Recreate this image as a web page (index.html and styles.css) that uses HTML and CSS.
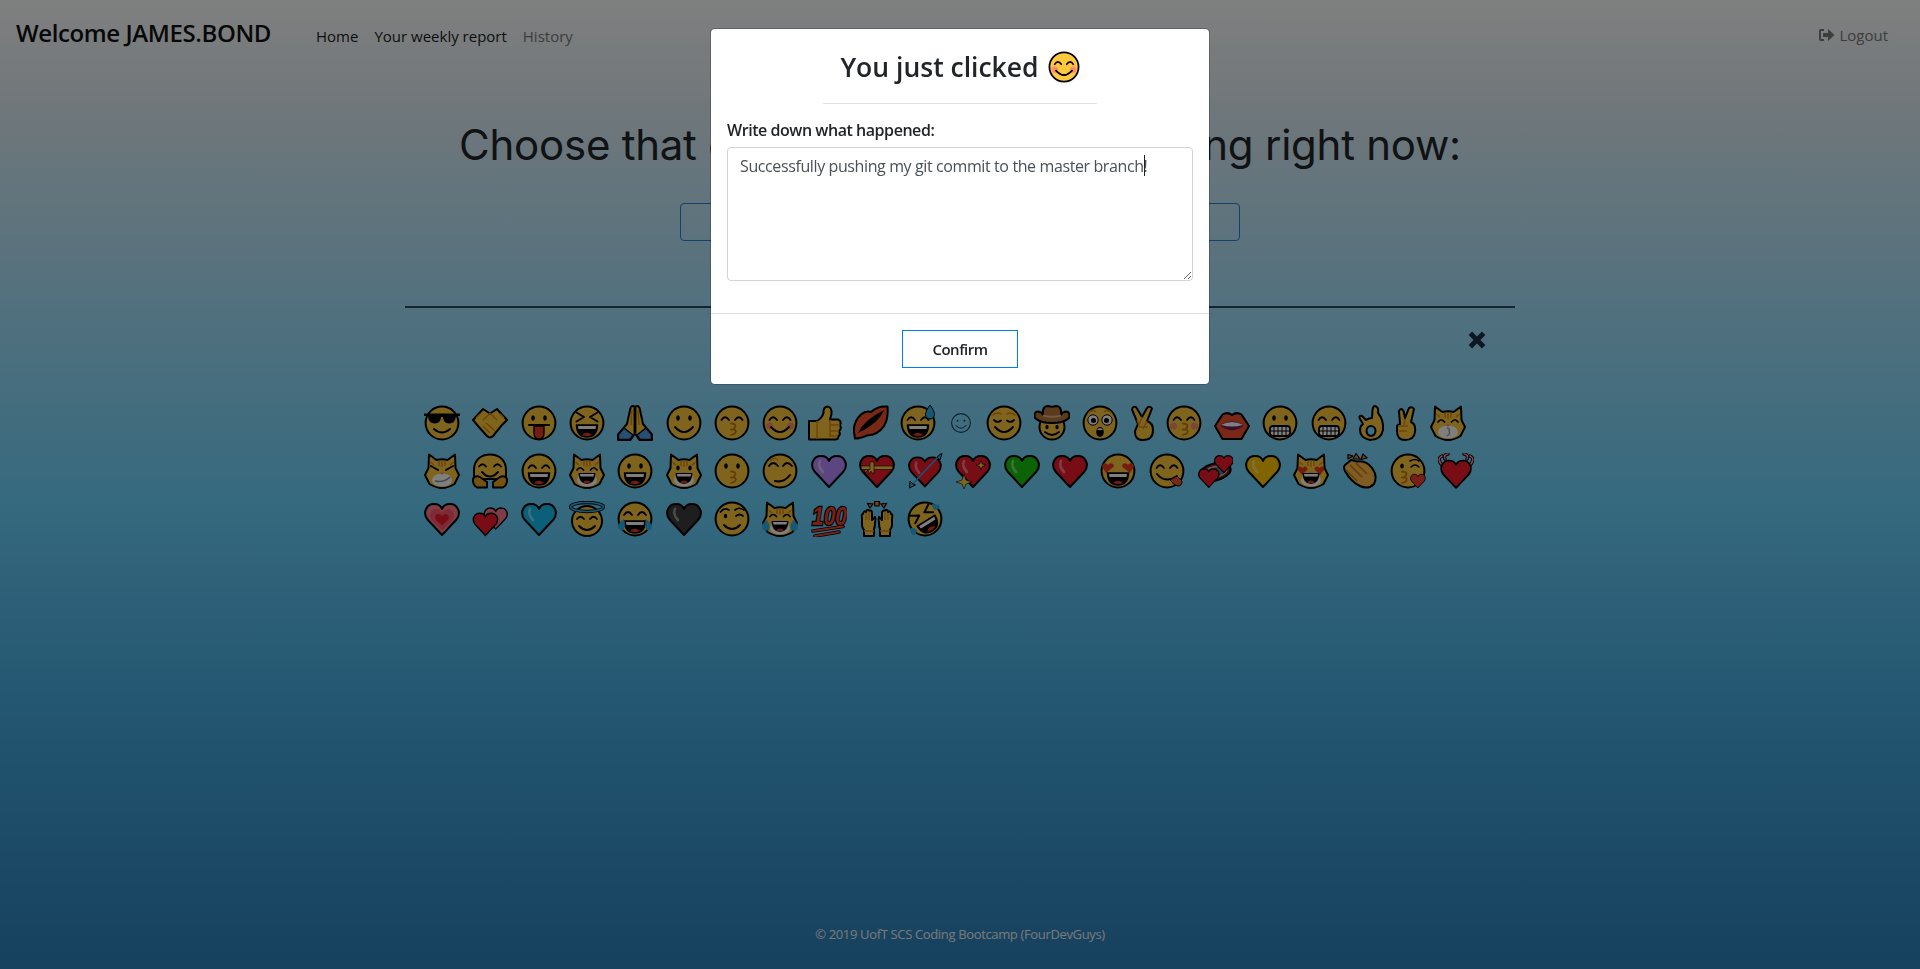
FILE: index.html
```html
<!DOCTYPE html>
<html lang="en">
<head>
<meta charset="utf-8">
<title>Emoji journal</title>
<link rel="stylesheet" href="styles.css">
</head>
<body>
<svg class="defs" aria-hidden="true">
<defs>
<!-- shared parts -->
<g id="F"><circle cx="18" cy="18" r="16.4" fill="#ffc83d" stroke="#000" stroke-width="2"/></g>
<g id="Cat"><path d="M5 1.5 12.5 7Q18 5.6 23.5 7L31 1.5 31.5 15 35 22 30.5 31Q24 35 18 35 12 35 5.5 31L1 22 4.5 15Z" fill="#ffc83d" stroke="#000" stroke-width="2" stroke-linejoin="round"/><path d="M15 7.5V13M18 7V14M21 7.5V13M6.5 9 10 12M29.5 9 26 12" stroke="#e08a10" stroke-width="1.5" fill="none"/><ellipse cx="18" cy="27" rx="10" ry="6.6" fill="#fff"/><path d="M16 19.5H20L18 22Z" fill="#f08a70"/></g>
<path id="Arcs" d="M7.500 15Q11 9.500 15 15M21 15Q25 9.500 28.500 15" fill="none" stroke="#000" stroke-width="1.800" stroke-linecap="round"/>
<g id="Dots"><ellipse cx="12" cy="13" rx="1.800" ry="2.800"/><ellipse cx="24" cy="13" rx="1.800" ry="2.800"/></g>
<path id="Smile" d="M9 22Q18 32 27 22" fill="none" stroke="#000" stroke-width="2" stroke-linecap="round"/>
<g id="Laugh"><path d="M7.500 20H28.500Q28 32 18 32 8 32 7.500 20Z" fill="#000" stroke="#000" stroke-width="1.500" stroke-linejoin="round"/><path d="M9 21H27L26.500 24H9.500Z" fill="#fff"/><path d="M13 30Q18 25.500 23 30 18 32 13 30Z" fill="#e8391f"/></g>
<g id="CatLaugh"><path d="M9.500 20H26.500Q26 31 18 31 10 31 9.500 20Z" fill="#000"/><path d="M11 21H25L24.500 23.500H11.500Z" fill="#fff"/><path d="M14 29.500Q18 25.500 22 29.500 18 31 14 29.500Z" fill="#e8391f"/></g>
<g id="Teeth"><rect x="8" y="21" width="20" height="10" rx="3" fill="#fff" stroke="#000" stroke-width="1.800"/><path d="M12 21V31M16 21V31M20 21V31M24 21V31M8 26H28" stroke="#000" stroke-width="1"/></g>
<path id="Kiss" d="M17 18.500Q23 19 21 22.500 18.500 24 21 25 24 28 17 30M17 24.500H20" fill="none" stroke="#c9780a" stroke-width="1.800" stroke-linecap="round"/>
<g id="Blush"><circle cx="7.500" cy="21" r="3.500" fill="#ff8a70"/><circle cx="28.500" cy="21" r="3.500" fill="#ff8a70"/></g>
<path id="H" d="M18 34 3.500 18.500C-2 11 3 3 10 3 14 3 17 5 18 8 19 5 22 3 26 3 33 3 38 11 32.500 18.500Z" stroke="#000" stroke-width="2" stroke-linejoin="round"/>
<path id="Shine" d="M9 8Q6.500 13 12 19" fill="none" stroke="#fff" stroke-opacity=".45" stroke-width="2.600" stroke-linecap="round"/>
<path id="EyeH" d="M6 20 2 13.500C2 10 6 9 8 12 10 9 14 10 14 13.500ZM30 20 34 13.500C34 10 30 9 28 12 26 9 22 10 22 13.500Z" fill="#e8391f"/>

<!-- whole emoji -->
<symbol id="e-cool" viewBox="0 0 36 36"><use href="#F"/><path d="M0 8.500H36V11H32Q31.500 18.500 25 18.500 19.500 18.500 19 12H17Q16.500 18.500 11 18.500 4.500 18.500 4 11H0Z"/><path d="M10 24Q18 31 26 24" fill="none" stroke="#000" stroke-width="2" stroke-linecap="round"/></symbol>
<symbol id="e-shake" viewBox="0 0 36 36"><path d="M11 4 18 8.500 25 4 35 15 30 20 21 31Q18 34 15 31L6 21 1 15Z" fill="#ffc83d" stroke="#000" stroke-width="2" stroke-linejoin="round"/><path d="M11 15 18 8.500 25 15M14 18 23 26M11 21 18 28M8 9 4 13M28 9 32 13" stroke="#e08a10" stroke-width="1.600" fill="none"/></symbol>
<symbol id="e-tongue" viewBox="0 0 36 36"><use href="#F"/><use href="#Dots"/><path d="M8 20H28" stroke="#000" stroke-width="2" stroke-linecap="round"/><path d="M13 21H23V28Q23 34 18 34 13 34 13 28Z" fill="#e8391f" stroke="#000" stroke-width="1.400"/></symbol>
<symbol id="e-xd" viewBox="0 0 36 36"><use href="#F"/><path d="M7.500 7.500 15 12 7.500 16.500M28.500 7.500 21 12 28.500 16.500" fill="none" stroke="#000" stroke-width="2" stroke-linecap="round" stroke-linejoin="round"/><use href="#Laugh"/></symbol>
<symbol id="e-pray" viewBox="0 0 36 36"><path d="M16 1Q13.500 1 13 5L10 19 1 29.500V35H13.500L17.600 29V3Q17.500 1 16 1ZM20 1Q22.500 1 23 5L26 19 35 29.500V35H22.500L18.400 29V3Q18.500 1 20 1Z" fill="#ffc83d" stroke="#000" stroke-width="2" stroke-linejoin="round"/><path d="M7 23 1.500 29.500V34.500H13L16 30ZM29 23 34.500 29.500V34.500H23L20 30Z" fill="#4f9fe8" stroke="#000" stroke-width="1.500" stroke-linejoin="round"/><path d="M15 5 14 20M21 5 22 20" stroke="#e08a10" stroke-width="1.500"/></symbol>
<symbol id="e-smile" viewBox="0 0 36 36"><use href="#F"/><use href="#Dots"/><use href="#Smile"/></symbol>
<symbol id="e-kiss-closed" viewBox="0 0 36 36"><use href="#F"/><use href="#Arcs"/><use href="#Kiss"/></symbol>
<symbol id="e-blush" viewBox="0 0 36 36"><use href="#F"/><use href="#Blush"/><use href="#Arcs"/><use href="#Smile"/></symbol>
<symbol id="e-thumb" viewBox="0 0 36 36"><path d="M1 16H9Q14 13 15.500 8 15 2 19.500 1.500 24 2 23.500 9L22 14.500H30Q34 16 32 20 34 24 31 26 33 30 30 31.500 31 34.500 27 34.500H1Z" fill="#ffc83d" stroke="#000" stroke-width="2" stroke-linejoin="round"/><path d="M9 16V34M22 15V20H32M22 20V26H31M22 26V31H30" stroke="#e08a10" stroke-width="1.500" fill="none"/></symbol>
<symbol id="e-lips" viewBox="0 0 36 36"><path d="M1 27Q0 17 8 9.500 13 5 18 7 24 1.500 32 1.500H34.500Q35.500 14 31 21 25 30 14 30.500 7 33.500 2 33.500Z" fill="#f0502a" stroke="#000" stroke-width="2" stroke-linejoin="round"/><path d="M5 28Q11 15 31 5 26 18 5 28Z"/></symbol>
<symbol id="e-sweat" viewBox="0 0 36 36"><use href="#F"/><use href="#Arcs"/><use href="#Laugh"/><path d="M30 0Q25.500 6 25.500 9.500A4.500 4.500 0 0 0 34.500 9.500Q34.500 6 30 0Z" fill="#2ab0ec" stroke="#000" stroke-width="1"/></symbol>
<symbol id="e-text-smile" viewBox="0 0 36 36"><g fill="none" stroke="#16405a" stroke-width="1.100"><circle cx="18" cy="18" r="9.400"/><path d="M13 20.500Q18 26 23 20.500" stroke-linecap="round"/></g><circle cx="14.600" cy="15.800" r="1" fill="#16405a"/><circle cx="21.400" cy="15.800" r="1" fill="#16405a"/></symbol>
<symbol id="e-relieved" viewBox="0 0 36 36"><use href="#F"/><path d="M8 15Q11.500 18.500 15 15.500M21 15.500Q24.500 18.500 28 15" fill="none" stroke="#000" stroke-width="1.800" stroke-linecap="round"/><path d="M7 10Q11 6.500 15 9M21 9Q25 6.500 29 10" fill="none" stroke="#e08a10" stroke-width="1.600" stroke-linecap="round"/><use href="#Smile"/></symbol>
<symbol id="e-cowboy" viewBox="0 0 36 36"><circle cx="18" cy="22" r="12.500" fill="#ffc83d" stroke="#000" stroke-width="2"/><path d="M1 13Q-.5 6.500 4 6.500 8 7 9 10 8 1 14 1 18 2.500 22 1 28 1 27 10 28 7 32 6.500 36.500 6.500 35 13 30 18 18 18 6 18 1 13Z" fill="#b4763a" stroke="#000" stroke-width="2" stroke-linejoin="round"/><path d="M9 10.500Q18 13 27 10.500" stroke="#e0b080" stroke-width="2" fill="none"/><ellipse cx="13" cy="22" rx="1.600" ry="2.300"/><ellipse cx="23" cy="22" rx="1.600" ry="2.300"/><path d="M11 27Q18 33 25 27" fill="none" stroke="#000" stroke-width="1.800" stroke-linecap="round"/></symbol>
<symbol id="e-shock" viewBox="0 0 36 36"><use href="#F"/><circle cx="11" cy="15" r="5.200" fill="#fff" stroke="#000" stroke-width="1"/><circle cx="25" cy="15" r="5.200" fill="#fff" stroke="#000" stroke-width="1"/><circle cx="11.500" cy="15.500" r="2.500"/><circle cx="24.500" cy="15.500" r="2.500"/><path d="M6 8Q10 4.500 14 6.500M22 6.500Q26 4.500 30 8" fill="none" stroke="#e08a10" stroke-width="1.500"/><ellipse cx="18" cy="27" rx="3.800" ry="5"/><path d="M15 24.500Q18 22 21 24.500 18 25.800 15 24.500Z" fill="#fff"/></symbol>
<symbol id="e-crossed" viewBox="0 0 36 36"><path d="M14 19 8 4.500Q8.500 1 12 2L18 12 23 3Q26 .5 28 3.500L23 16Q29 18 29 25 29 35 19 35 10.500 35 11 26Z" fill="#ffc83d" stroke="#000" stroke-width="2" stroke-linejoin="round"/><path d="M18 12 15 20 13 15M15 22H24M23 16 19 24" stroke="#e08a10" stroke-width="1.400" fill="none"/></symbol>
<symbol id="e-kiss-blush" viewBox="0 0 36 36"><use href="#F"/><use href="#Blush"/><use href="#Arcs"/><use href="#Kiss"/></symbol>
<symbol id="e-mouth" viewBox="0 0 36 36"><path d="M1 21 8.500 9.500Q13.500 6.500 18 10 22.500 6.500 27.500 9.500L35 21 27.500 34H8.500Z" fill="#f0502a" stroke="#000" stroke-width="2" stroke-linejoin="round"/><path d="M6 20.500Q18 12 30 20.500 18 30 6 20.500Z" fill="#7a1b60"/><path d="M7 20Q18 14 29 20 18 23 7 20Z" fill="#fff"/></symbol>
<symbol id="e-grin" viewBox="0 0 36 36"><use href="#F"/><use href="#Dots"/><use href="#Teeth"/></symbol>
<symbol id="e-beam" viewBox="0 0 36 36"><use href="#F"/><use href="#Arcs"/><use href="#Teeth"/></symbol>
<symbol id="e-ok" viewBox="0 0 36 36"><path fill-rule="evenodd" d="M22 1Q26 2 25 8 31 15 30 25 28 35 17 35 7 33 7 25 7 21 10 19L6.500 13Q6 10 9 11L13 15Q16 13 19 13L19.500 5Q20 1 22 1ZM18 21A4.500 5 0 1 0 18 31 4.500 5 0 1 0 18 21Z" fill="#ffc83d" stroke="#000" stroke-width="2" stroke-linejoin="round"/></symbol>
<symbol id="e-peace" viewBox="0 0 36 36"><path d="M12 19 11 6Q13 2 15.500 6L17 13 21 3Q24 1 26 4L23 17Q28 19 27 27 26 35 17 35 9 35 9 26L9 21Q10 19 12 19Z" fill="#ffc83d" stroke="#000" stroke-width="2" stroke-linejoin="round"/><path d="M10 21H20M11 26H19M17 14 16 20" stroke="#e08a10" stroke-width="1.400" fill="none"/></symbol>
<symbol id="e-cat-kiss" viewBox="0 0 36 36"><use href="#Cat"/><path d="M8 17Q11 12.500 14.500 17M21.500 17Q25 12.500 28 17" fill="none" stroke="#000" stroke-width="1.700" stroke-linecap="round"/><path d="M17 23Q21 24 19 26 21 28 17 31" fill="none" stroke="#a0a0a0" stroke-width="1.500"/></symbol>

<symbol id="e-cat-smirk" viewBox="0 0 36 36"><use href="#Cat"/><path d="M7 13 14 17M29 13 22 17" stroke="#000" stroke-width="2" stroke-linecap="round"/><path d="M11 28Q20 30 26 24" fill="none" stroke="#909090" stroke-width="1.600"/></symbol>
<symbol id="e-hug" viewBox="0 0 36 36"><path d="M2 17C2 7 9 1.500 18 1.500S34 7 34 17V26H2Z" fill="#ffc83d" stroke="#000" stroke-width="2"/><path d="M7 13.500Q10.500 9 14 13.500M22 13.500Q25.500 9 29 13.500" fill="none" stroke="#000" stroke-width="1.800" stroke-linecap="round"/><path d="M10 19Q18 28 26 19" fill="none" stroke="#000" stroke-width="2" stroke-linecap="round"/><path d="M1 26Q3 22 8 24L15 29V34.500H5Q.5 32 1 26ZM35 26Q33 22 28 24L21 29V34.500H31Q35.500 32 35 26Z" fill="#e8a520" stroke="#000" stroke-width="2" stroke-linejoin="round"/></symbol>
<symbol id="e-laugh" viewBox="0 0 36 36"><use href="#F"/><use href="#Arcs"/><use href="#Laugh"/></symbol>
<symbol id="e-cat-laugh" viewBox="0 0 36 36"><use href="#Cat"/><path d="M8 17Q11 12.500 14.500 17M21.500 17Q25 12.500 28 17" fill="none" stroke="#000" stroke-width="1.700" stroke-linecap="round"/><use href="#CatLaugh"/></symbol>
<symbol id="e-open" viewBox="0 0 36 36"><use href="#F"/><use href="#Dots"/><use href="#Laugh"/></symbol>
<symbol id="e-cat-open" viewBox="0 0 36 36"><use href="#Cat"/><ellipse cx="12" cy="15" rx="1.700" ry="2.400"/><ellipse cx="24" cy="15" rx="1.700" ry="2.400"/><use href="#CatLaugh"/></symbol>
<symbol id="e-kiss" viewBox="0 0 36 36"><use href="#F"/><use href="#Dots"/><use href="#Kiss"/></symbol>
<symbol id="e-smirk" viewBox="0 0 36 36"><use href="#F"/><path d="M7 13Q11 7 16 13M21 13Q25 7 30 13" fill="none" stroke="#000" stroke-width="1.800" stroke-linecap="round"/><path d="M8 8Q12 3.500 16 7" fill="none" stroke="#e08a10" stroke-width="1.400"/><path d="M13 28Q22 30 28 22" fill="none" stroke="#000" stroke-width="2" stroke-linecap="round"/></symbol>
<symbol id="e-heart-purple" viewBox="0 0 36 36"><use href="#H" fill="#b98cff"/><use href="#Shine"/></symbol>
<symbol id="e-heart-gift" viewBox="0 0 36 36"><use href="#H" fill="#f01a2c"/><path d="M2 13H34L33 16.500H2.500Z" fill="#ffc83d" stroke="#000" stroke-width=".6"/><path d="M11 9H15V20H13L12 18 10.500 21 9 17 6 20V16.500H11Z" fill="#ffc83d" stroke="#000" stroke-width=".6"/></symbol>
<symbol id="e-heart-arrow" viewBox="0 0 36 36"><use href="#H" fill="#f01a2c" transform="translate(1 1.500) scale(.94)"/><use href="#Shine" transform="translate(1 2) scale(.94)"/><path d="M3 34 31 4" stroke="#2ab0ec" stroke-width="1.500"/><path d="M33.500 1 35 .5 33 7 30 4ZM2.500 35 3 28 6 31 8.500 32Z" fill="#2ab0ec" stroke="#000" stroke-width="1"/></symbol>
<symbol id="e-heart-spark" viewBox="0 0 36 36"><use href="#H" fill="#f01a2c"/><use href="#Shine"/><path d="M9 21 11 27 17 29 11 31 9 36 7 31 1 29 7 27ZM26 7 27.200 11 31 12 27.200 13.500 26 17 24.800 13.500 21 12 24.800 11Z" fill="#ffc83d" stroke="#000" stroke-width=".6"/></symbol>
<symbol id="e-heart-green" viewBox="0 0 36 36"><use href="#H" fill="#16c60c"/><use href="#Shine"/></symbol>
<symbol id="e-heart-red" viewBox="0 0 36 36"><use href="#H" fill="#f01a2c"/><use href="#Shine"/></symbol>
<symbol id="e-heart-eyes" viewBox="0 0 36 36"><use href="#F"/><use href="#EyeH"/><use href="#Laugh"/></symbol>
<symbol id="e-yum" viewBox="0 0 36 36"><use href="#F"/><use href="#Arcs"/><path d="M8 21Q16 31 28 23" fill="none" stroke="#000" stroke-width="2" stroke-linecap="round"/><path d="M21 27 28 23 33 28Q33 33 29 33 25 33 21 27Z" fill="#f0502a" stroke="#000" stroke-width="1"/></symbol>
<symbol id="e-heart-spin" viewBox="0 0 36 36"><ellipse cx="18" cy="19" rx="16" ry="8.500" transform="rotate(-14 18 19)" fill="#7a2a30" stroke="#000" stroke-width="2"/><ellipse cx="18" cy="19" rx="12" ry="5.500" transform="rotate(-14 18 19)" fill="#4d7d8f" stroke="#ff8fa0" stroke-width="1.500"/><use href="#H" fill="#f01a2c" transform="translate(17 1) scale(.55)"/><use href="#H" fill="#f01a2c" transform="translate(1 14) scale(.6)"/></symbol>
<symbol id="e-heart-gold" viewBox="0 0 36 36"><use href="#H" fill="#ffc800"/><use href="#Shine"/></symbol>
<symbol id="e-cat-heart" viewBox="0 0 36 36"><use href="#Cat"/><path d="M9 22 4.500 16.500C4.500 13 8 12.500 9.500 15 11 12.500 14.500 13 14.500 16.500ZM27 22 31.500 16.500C31.500 13 28 12.500 26.500 15 25 12.500 21.500 13 21.500 16.500Z" fill="#e8391f"/><use href="#CatLaugh"/></symbol>
<symbol id="e-clap" viewBox="0 0 36 36"><path d="M3 12 9 7 15 8.500Q24 7 30 15 36 23 32 31 26 37 18 33 9 29 3 18 1 14 3 12Z" fill="#ffb948" stroke="#000" stroke-width="2" stroke-linejoin="round"/><path d="M4 17 15 28M8 12 20 24M14 10 25 21" stroke="#c47a10" stroke-width="1.500" fill="none"/><path d="M11 6 14 .5 18 6ZM19 6.500 21 1 25 5ZM6 6 6 1.500 11 3Z" fill="#f58220" stroke="#000" stroke-width="1.200" stroke-linejoin="round"/></symbol>
<symbol id="e-blow" viewBox="0 0 36 36"><use href="#F"/><ellipse cx="12" cy="13" rx="1.800" ry="2.600"/><path d="M21 14Q25 10 29 14M20 8Q25 5 29 8" fill="none" stroke="#000" stroke-width="1.600" stroke-linecap="round"/><use href="#Kiss" transform="translate(-5 0)"/><use href="#H" fill="#f0402a" transform="translate(20 20) scale(.44)"/></symbol>
<symbol id="e-heart-beat" viewBox="0 0 36 36"><path d="M3 11Q-1 5 4 3M7 6Q5 2 10 1M33 11Q37 5 32 3M29 6Q31 2 26 1" fill="none" stroke="#000" stroke-width="3.400" stroke-linecap="round"/><path d="M3 11Q-1 5 4 3M7 6Q5 2 10 1M33 11Q37 5 32 3M29 6Q31 2 26 1" fill="none" stroke="#ff8fa0" stroke-width="1.600" stroke-linecap="round"/><use href="#H" fill="#f01a2c" transform="translate(2.200 5) scale(.88)"/></symbol>

<symbol id="e-heart-grow" viewBox="0 0 36 36"><use href="#H" fill="#ff7a90"/><path d="M18 30 7.500 19C4 13.500 7.500 8 12 8 15 8 17 9.500 18 12 19 9.500 21 8 24 8 28.500 8 32 13.500 28.500 19Z" fill="#ff5468"/><path d="M18 24.500 12 19C10 15.500 12 13 14.500 13 16 13 17.500 14 18 15.500 18.500 14 20 13 21.500 13 24 13 26 15.500 24 19Z" fill="#f01a2c"/></symbol>
<symbol id="e-hearts-two" viewBox="0 0 36 36"><use href="#H" fill="#ff7a90" transform="translate(11.500 5) scale(.68)"/><use href="#H" fill="#f01a2c" transform="translate(.5 10) scale(.72)"/></symbol>
<symbol id="e-heart-blue" viewBox="0 0 36 36"><use href="#H" fill="#14bff2"/><use href="#Shine"/></symbol>
<symbol id="e-halo" viewBox="0 0 36 36"><circle cx="18" cy="20" r="15" fill="#ffc83d" stroke="#000" stroke-width="2"/><ellipse cx="18" cy="6" rx="16.500" ry="4.500" fill="none" stroke="#000" stroke-width="3.400"/><ellipse cx="18" cy="6" rx="16.500" ry="4.500" fill="none" stroke="#2ab0ec" stroke-width="1.700"/><path d="M8 18Q11.500 13.500 15 18M21 18Q24.500 13.500 28 18" fill="none" stroke="#000" stroke-width="1.800" stroke-linecap="round"/><path d="M10 25Q18 33 26 25" fill="none" stroke="#000" stroke-width="2" stroke-linecap="round"/></symbol>
<symbol id="e-joy" viewBox="0 0 36 36"><use href="#F"/><path d="M7 14Q11 8 15 14M21 14Q25 8 29 14" fill="none" stroke="#000" stroke-width="1.800" stroke-linecap="round"/><use href="#Laugh"/><path d="M7 18Q2 21 1 26 2 30 6 29 9 26 7 18ZM29 18Q34 21 35 26 34 30 30 29 27 26 29 18Z" fill="#2ab0ec"/></symbol>
<symbol id="e-heart-black" viewBox="0 0 36 36"><use href="#H" fill="#3c3c3c"/><use href="#Shine"/></symbol>
<symbol id="e-wink" viewBox="0 0 36 36"><use href="#F"/><ellipse cx="11.500" cy="15" rx="1.700" ry="2.200"/><path d="M22 15Q25.500 12 29 15M21 9Q25 5.500 30 9M6.500 11Q10 6 15 9" fill="none" stroke="#000" stroke-width="1.700" stroke-linecap="round"/><path d="M10 24Q18 32 26 24" fill="none" stroke="#000" stroke-width="2" stroke-linecap="round"/></symbol>
<symbol id="e-cat-joy" viewBox="0 0 36 36"><use href="#Cat"/><path d="M8 15.500Q11 11.500 14.500 15.500M21.500 15.500Q25 11.500 28 15.500" fill="none" stroke="#000" stroke-width="1.700" stroke-linecap="round"/><use href="#CatLaugh"/><path d="M5 19Q-1 23 .5 28 3 31 7 29 9 24 5 19ZM31 19Q37 23 35.500 28 33 31 29 29 27 24 31 19Z" fill="#2ab0ec"/></symbol>
<symbol id="e-hundred" viewBox="0 0 36 36"><text class="hundred" x="1" y="24" textLength="35" lengthAdjust="spacingAndGlyphs">100</text><path d="M2 30 32 25.500M4 35 28 31" stroke="#000" stroke-width="3.600" stroke-linecap="round"/><path d="M2 30 32 25.500M4 35 28 31" stroke="#f0402a" stroke-width="1.800" stroke-linecap="round"/></symbol>
<symbol id="e-raise" viewBox="0 0 36 36"><path d="M3 17Q2 13 4 13 5 9 7 11 8 7.500 10 9.500 13 9 13 12V19L16 16Q17 18 16 22 16 26 15 28V35H5V29Q3 27 3 24Z" fill="#ffc83d" stroke="#000" stroke-width="2" stroke-linejoin="round"/><path d="M33 17Q34 13 32 13 31 9 29 11 28 7.500 26 9.500 23 9 23 12V19L20 16Q19 18 20 22 20 26 21 28V35H31V29Q33 27 33 24Z" fill="#ffc83d" stroke="#000" stroke-width="2" stroke-linejoin="round"/><path d="M7 12V19M10 11V19M29 12V19M26 11V19M5 30H15M21 30H31" stroke="#d98a10" stroke-width="1.300"/><path d="M11 7 8.500 2.500 14 3ZM16 5 15.500 .5 20.500 .5 20 5ZM25 7 27.500 2.500 22 3Z" fill="#f58220" stroke="#000" stroke-width="1.200"/></symbol>
<symbol id="e-rofl" viewBox="0 0 36 36"><use href="#F"/><g transform="rotate(-32 18 18)"><path d="M7.500 7.500 15 12 7.500 16.500M28.500 7.500 21 12 28.500 16.500" fill="none" stroke="#000" stroke-width="2" stroke-linecap="round" stroke-linejoin="round"/><use href="#Laugh"/></g><path d="M25 3Q31 3 33 5 32 9 28 9 25 8 25 3ZM4 27Q8 26 10 30 9 34 6 34 2 32 4 27Z" fill="#2ab0ec"/></symbol>
</defs>
</svg>

<div class="page">
  <nav class="navbar">
    <span class="brand">Welcome JAMES.BOND</span>
    <a class="nav-link" href="#">Home</a>
    <a class="nav-link" href="#">Your weekly report</a>
    <a class="nav-link muted" href="#">History</a>
    <a class="nav-link muted logout" href="#">
      <svg class="logout-icon" viewBox="0 0 17 14"><path d="M6 1H3Q1 1 1 3V11Q1 13 3 13H6V11H3V3H6Z"/><path d="M5 5H10V1L16.500 7 10 13V9H5Z"/></svg>
      Logout
    </a>
  </nav>

  <main class="content">
    <h1 class="headline">Choose that emoji for how you're feeling right now:</h1>
    <input class="search" type="text" aria-label="Search emoji">
    <hr class="rule">
    <div class="close-row">
      <svg class="close-icon" viewBox="0 0 18 18"><path d="M3 3 15 15M15 3 3 15"/></svg>
    </div>
    <div class="emoji-grid">
      <span class="em"><svg><use href="#e-cool"/></svg></span>
      <span class="em"><svg><use href="#e-shake"/></svg></span>
      <span class="em"><svg><use href="#e-tongue"/></svg></span>
      <span class="em"><svg><use href="#e-xd"/></svg></span>
      <span class="em"><svg><use href="#e-pray"/></svg></span>
      <span class="em"><svg><use href="#e-smile"/></svg></span>
      <span class="em"><svg><use href="#e-kiss-closed"/></svg></span>
      <span class="em"><svg><use href="#e-blush"/></svg></span>
      <span class="em w44"><svg><use href="#e-thumb"/></svg></span>
      <span class="em w46"><svg><use href="#e-lips"/></svg></span>
      <span class="em"><svg><use href="#e-sweat"/></svg></span>
      <span class="em w38"><svg><use href="#e-text-smile"/></svg></span>
      <span class="em"><svg><use href="#e-relieved"/></svg></span>
      <span class="em"><svg><use href="#e-cowboy"/></svg></span>
      <span class="em"><svg><use href="#e-shock"/></svg></span>
      <span class="em w35"><svg><use href="#e-crossed"/></svg></span>
      <span class="em"><svg><use href="#e-kiss-blush"/></svg></span>
      <span class="em"><svg><use href="#e-mouth"/></svg></span>
      <span class="em"><svg><use href="#e-grin"/></svg></span>
      <span class="em"><svg><use href="#e-beam"/></svg></span>
      <span class="em w36"><svg><use href="#e-ok"/></svg></span>
      <span class="em w35"><svg><use href="#e-peace"/></svg></span>
      <span class="em"><svg><use href="#e-cat-kiss"/></svg></span>

      <span class="em"><svg><use href="#e-cat-smirk"/></svg></span>
      <span class="em"><svg><use href="#e-hug"/></svg></span>
      <span class="em"><svg><use href="#e-laugh"/></svg></span>
      <span class="em"><svg><use href="#e-cat-laugh"/></svg></span>
      <span class="em"><svg><use href="#e-open"/></svg></span>
      <span class="em"><svg><use href="#e-cat-open"/></svg></span>
      <span class="em"><svg><use href="#e-kiss"/></svg></span>
      <span class="em"><svg><use href="#e-smirk"/></svg></span>
      <span class="em"><svg><use href="#e-heart-purple"/></svg></span>
      <span class="em"><svg><use href="#e-heart-gift"/></svg></span>
      <span class="em"><svg><use href="#e-heart-arrow"/></svg></span>
      <span class="em"><svg><use href="#e-heart-spark"/></svg></span>
      <span class="em"><svg><use href="#e-heart-green"/></svg></span>
      <span class="em"><svg><use href="#e-heart-red"/></svg></span>
      <span class="em"><svg><use href="#e-heart-eyes"/></svg></span>
      <span class="em"><svg><use href="#e-yum"/></svg></span>
      <span class="em"><svg><use href="#e-heart-spin"/></svg></span>
      <span class="em"><svg><use href="#e-heart-gold"/></svg></span>
      <span class="em"><svg><use href="#e-cat-heart"/></svg></span>
      <span class="em"><svg><use href="#e-clap"/></svg></span>
      <span class="em"><svg><use href="#e-blow"/></svg></span>
      <span class="em"><svg><use href="#e-heart-beat"/></svg></span>

      <span class="em"><svg><use href="#e-heart-grow"/></svg></span>
      <span class="em"><svg><use href="#e-hearts-two"/></svg></span>
      <span class="em"><svg><use href="#e-heart-blue"/></svg></span>
      <span class="em"><svg><use href="#e-halo"/></svg></span>
      <span class="em"><svg><use href="#e-joy"/></svg></span>
      <span class="em"><svg><use href="#e-heart-black"/></svg></span>
      <span class="em"><svg><use href="#e-wink"/></svg></span>
      <span class="em"><svg><use href="#e-cat-joy"/></svg></span>
      <span class="em"><svg><use href="#e-hundred"/></svg></span>
      <span class="em"><svg><use href="#e-raise"/></svg></span>
      <span class="em"><svg><use href="#e-rofl"/></svg></span>
    </div>
  </main>

  <footer class="footer">© 2019 UofT SCS Coding Bootcamp (FourDevGuys)</footer>
</div>

<div class="backdrop"></div>

<div class="modal-wrap">
  <div class="modal">
    <div class="modal-head">
      <h2 class="modal-title">You just clicked <svg class="title-emoji"><use href="#e-blush"/></svg></h2>
      <hr class="modal-rule">
    </div>
    <div class="modal-body">
      <label class="modal-label" for="what">Write down what happened:</label>
      <div class="area-wrap">
        <textarea class="area" id="what">Successfully pushing my git commit to the master branch!</textarea>
        <span class="caret"></span>
      </div>
    </div>
    <div class="modal-foot">
      <button class="confirm" type="button">Confirm</button>
    </div>
  </div>
</div>
</body>
</html>
```

FILE: styles.css
```css
* { box-sizing: border-box; }

html, body { height: 100%; }

body {
  margin: 0;
  font-family: "Open Sans", "Noto Sans", sans-serif;
  font-size: 16px;
  color: #212529;
  background: linear-gradient(180deg, #ffffff 0, #e2eff6 100px, #a6e2fc 300px, #6cd4fe 500px, #48aee2 700px, #2c82be 100%);
}

.defs { position: absolute; width: 0; height: 0; overflow: hidden; }

.page {
  min-height: 100%;
  display: flex;
  flex-direction: column;
}

/* nav */
.navbar {
  display: flex;
  align-items: baseline;
  padding: 16px 16px 0;
  height: 72px;
}

.brand {
  font-size: 24px;
  font-weight: 600;
  letter-spacing: -.4px;
  margin-right: 45px;
  color: #111;
}

.nav-link {
  font-size: 15px;
  color: #1c1c1c;
  text-decoration: none;
  margin-right: 16px;
}

.nav-link.muted { color: #7a7a7a; }

.logout {
  margin-left: auto;
  margin-right: 16px;
  display: flex;
  align-items: center;
  gap: 4px;
}

.logout-icon { width: 17px; height: 14px; fill: #7a7a7a; }

/* main */
.content {
  width: 1140px;
  margin: 0 auto;
  padding: 0 15px;
  display: flex;
  flex-direction: column;
  align-items: center;
}

.headline {
  font-family: Inter, "Open Sans", sans-serif;
  font-size: 42px;
  font-weight: 400;
  letter-spacing: -.25px;
  line-height: 48px;
  margin: 49px 0 34px;
  color: #212529;
  white-space: nowrap;
}

.search {
  width: 560px;
  height: 38px;
  border: 1px solid #2a7fdc;
  border-radius: 4px;
  background: transparent;
}

.rule {
  align-self: stretch;
  border: 0;
  height: 2px;
  margin: 65px 0 0;
  background: #2f4a66;
}

.close-row {
  align-self: stretch;
  display: flex;
  justify-content: flex-end;
  padding: 22px 28px 0 0;
  height: 91px;
}

.close-icon {
  width: 20px;
  height: 20px;
  fill: none;
  stroke: #1a2f48;
  stroke-width: 4.4;
}

.emoji-grid {
  align-self: stretch;
  display: flex;
  flex-wrap: wrap;
  padding: 0 13px;
}

.em {
  flex: none;
  width: 48.3px;
  height: 48px;
  display: flex;
  align-items: center;
  justify-content: center;
}

.em svg { width: 36px; height: 36px; display: block; overflow: visible; flex: none; }

.w46 { width: 45px; }
.w44 { width: 44px; }
.w38 { width: 38px; }
.w36 { width: 36px; }
.w35 { width: 35px; }

.hundred {
  font-family: "Liberation Sans", sans-serif;
  font-style: italic;
  font-weight: 700;
  font-size: 25px;
  fill: #f0402a;
  stroke: #000;
  stroke-width: 2.4px;
  paint-order: stroke;
}

/* footer */
.footer {
  margin-top: auto;
  padding-bottom: 25px;
  text-align: center;
  font-size: 13px;
  letter-spacing: -.35px;
  line-height: 20px;
  color: #f2f2f2;
}

/* modal */
.backdrop {
  position: fixed;
  inset: 0;
  background: rgba(0, 0, 0, .5);
}

.modal-wrap {
  position: fixed;
  inset: 0;
  display: flex;
  justify-content: center;
  align-items: flex-start;
  padding-top: 28px;
}

.modal {
  width: 500px;
  background: #fff;
  border: 1px solid rgba(0, 0, 0, .2);
  border-radius: 5px;
  background-clip: padding-box;
}

.modal-head {
  padding-top: 17px;
  text-align: center;
}

.modal-title {
  margin: 0;
  font-size: 26.5px;
  font-weight: 600;
  line-height: 42px;
  color: #212529;
  display: flex;
  align-items: center;
  justify-content: center;
  gap: 9px;
}

.title-emoji { width: 32px; height: 32px; overflow: visible; }

.modal-rule {
  width: 274px;
  margin: 15px auto 0;
  border: 0;
  border-top: 1px solid #e2e2e2;
}

.modal-body { padding: 14px 16px 32px; }

.modal-label {
  display: block;
  font-weight: 600;
  letter-spacing: -.45px;
  line-height: 24px;
  margin-bottom: 5px;
  color: #212529;
}

.area-wrap { position: relative; }

.area {
  display: block;
  width: 100%;
  height: 134px;
  padding: 6px 12px;
  font: 16px/24px "Open Sans", "Noto Sans", sans-serif;
  letter-spacing: -.39px;
  color: #495057;
  border: 1px solid #ced4da;
  border-radius: 4px;
  outline: none;
}

.caret {
  position: absolute;
  left: 417px;
  top: 8px;
  width: 1px;
  height: 21px;
  background: #222;
}

.modal-foot {
  border-top: 1px solid #e2e2e2;
  padding: 16px;
  display: flex;
  justify-content: center;
}

.confirm {
  width: 116px;
  height: 38px;
  background: #fff;
  border: 1px solid #007bff;
  font: 600 15px "Open Sans", "Noto Sans", sans-serif;
  letter-spacing: -.5px;
  color: #212529;
}
```
